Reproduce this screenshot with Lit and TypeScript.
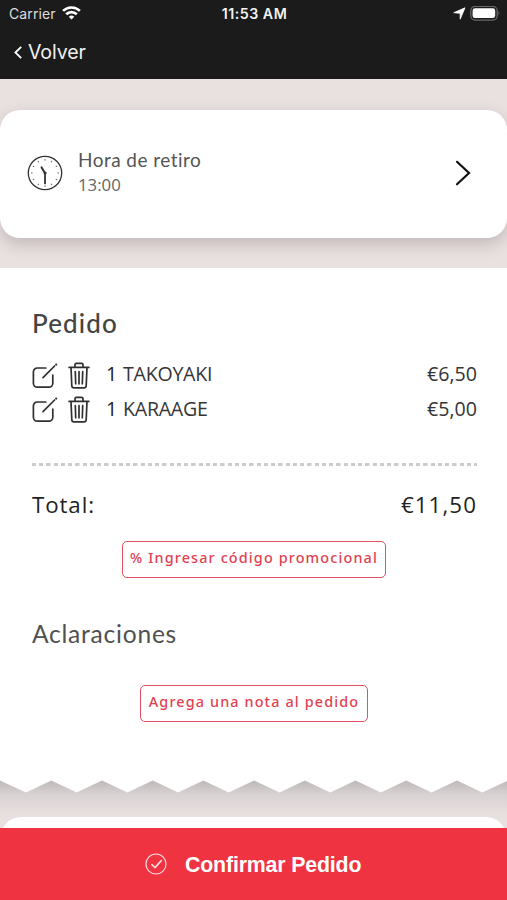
import { LitElement, html, css, svg } from "lit";
import { customElement, property } from "lit/decorators.js";

const euros = (n: number) => "€" + n.toFixed(2).replace(".", ",");

@customElement("status-bar")
class StatusBar extends LitElement {
  static styles = css`
    :host { display: grid; grid-template-columns: 1fr auto 1fr; align-items: center; height: 27px; padding: 0 7px 0 9px; color: #f2f2f2; font: 14px/27px Inter, sans-serif; }
    .side { display: flex; align-items: center; gap: 6px; }
    .carrier { letter-spacing: 0.1px; color: #dedede; }
    .time { font-weight: 600; letter-spacing: 0.5px; font-size: 14.2px; }
    .end { justify-content: flex-end; gap: 4px; }
    svg { display: block; }
    .wifi { margin-top: -2px; }
  `;
  render() {
    return html`
      <div class="side">
        <span class="carrier">Carrier</span>
        <svg class="wifi" width="19" height="14" viewBox="0 0 19 14" fill="none" stroke="#fff" stroke-width="2.6">
          <path d="M1.1 4.9a12 12 0 0 1 16.8 0" /><path d="M4.2 8.3a7.6 7.6 0 0 1 10.6 0" />
          <path d="M9.5 13.6 6.8 10.8a3.9 3.9 0 0 1 5.4 0z" fill="#fff" stroke="none" />
        </svg>
      </div>
      <span class="time">11:53 AM</span>
      <div class="side end">
        <svg width="13" height="13" viewBox="0 0 13 13"><path d="M12 .8 7.2 12.2V6.3L.8 5.7z" fill="#fff" stroke="#fff" stroke-width=".8" stroke-linejoin="round" /></svg>
        <svg width="30" height="16" viewBox="0 0 30 16">
          <rect x=".8" y=".4" width="26.4" height="13.8" rx="4.4" fill="none" stroke="#686868" stroke-width="1.3" />
          <rect x="2.6" y="2.3" width="22.6" height="9.8" rx="2.4" fill="#fff" />
          <path d="M28.6 5q1.5 2.2 0 4.4z" fill="#777" />
        </svg>
      </div>`;
  }
}

@customElement("order-line")
class OrderLine extends LitElement {
  @property({ type: Number }) qty = 1;
  @property() name = "";
  @property({ type: Number }) price = 0;
  static styles = css`
    :host { display: flex; align-items: center; height: 34.5px; color: #353535; font: 19.6px/34px "Open Sans", sans-serif; }
    svg { display: block; fill: none; stroke: #303030; stroke-width: 1.7; stroke-linecap: round; stroke-linejoin: round; margin-top: 3px; }
    .trash { margin-left: 10px; }
    .qty { margin-left: 16px; width: 17px; font-weight: 500; color: #222; }
    .name { flex: 1; letter-spacing: -0.25px; }
  `;
  render() {
    return html`
      <svg width="26" height="28" viewBox="0 0 26 28">
        <path d="M13.8 6H5.4a4 4 0 0 0-4 4v11.2a4 4 0 0 0 4 4h11.4a4 4 0 0 0 4-4v-8" />
        <path d="M11 15.6 22.6 4" /><path d="M24.2 2.5v.1" stroke-width="2.2" />
      </svg>
      <svg class="trash" width="22" height="28" viewBox="0 0 22 28">
        <path d="M1.1 5.4h19.8M7 5V2.7Q7 1.4 8.3 1.4h5.4Q15 1.4 15 2.7V5M3 5.6l.8 18.1a2.3 2.3 0 0 0 2.3 2.2h9.8a2.3 2.3 0 0 0 2.3-2.2L19 5.6M7.3 9.5l.4 12.3M11 9.5v12.3M14.7 9.5l-.4 12.3" />
      </svg>
      <span class="qty">${this.qty}</span><span class="name">${this.name}</span>
      <span>${euros(this.price)}</span>`;
  }
}

@customElement("app-root")
class AppRoot extends LitElement {
  static styles = css`
    :host { display: flex; flex-direction: column; height: 900px; overflow: hidden; background: #e9e0e0; font-family: "Open Sans", sans-serif; }
    svg { display: block; }
    header { height: 79px; background: #1b1b1b; flex: none; }
    .back { display: flex; align-items: center; gap: 6px; height: 50px; padding-left: 14px; color: #f0f0f0; font: 19.6px/52px Inter, sans-serif; letter-spacing: -0.15px; }
    .pickup { flex: none; display: flex; align-items: center; height: 128px; box-sizing: border-box; margin-top: 31px; padding: 0 36px 2px 27px; background: #fff; border-radius: 20px; box-shadow: 0 6px 16px rgba(60, 45, 50, 0.22); }
    .when { flex: 1; margin: -2px 0 0 15px; }
    .label { font: 19px/25px Lato, sans-serif; color: #555; letter-spacing: 0.46px; }
    .hour { font-size: 16.8px; line-height: 25px; color: #666; }
    .ticket { flex: none; height: 512px; box-sizing: border-box; margin-top: 30px; padding: 36px 30px 0 32px; background: #fff; }
    h2 { margin: 0; font: 500 26px/38px Lato, sans-serif; color: #444; letter-spacing: 1.1px; }
    .lines { margin-top: 15px; }
    .rule { height: 2.6px; margin-top: 37px; width: 445px; background: repeating-linear-gradient(90deg, #ccc 0 3.8px, transparent 4.2px 7.25px); }
    .total { display: flex; justify-content: space-between; margin-top: 21px; font-size: 22.3px; line-height: 36px; color: #222; letter-spacing: 0.9px; }
    .total .sum { letter-spacing: 1.1px; }
    .btn { display: block; box-sizing: border-box; height: 37px; border: 1.4px solid #e5515f; border-radius: 5px; background: #fff; color: #e23f50; font: 500 14.4px/30px "Noto Sans", sans-serif; padding: 0 0 2px; letter-spacing: 1.13px; white-space: nowrap; }
    .promo { width: 264px; margin: 18px 0 0 90px; }
    .note { width: 228px; margin: 33px 0 0 108px; }
    h3 { margin: 37px 0 0; font: 24.6px/37px Lato, sans-serif; color: #505050; letter-spacing: 0.75px; }
    .edge { flex: none; }
    .next { flex: none; height: 40px; margin: -3px 1px 0; background: #fff; border-radius: 20px; }
    .confirm { position: absolute; left: 0; right: 0; top: 828px; height: 72px; display: flex; align-items: center; gap: 18px; padding: 0 0 0 145px; box-sizing: border-box; background: #ef3340; color: #fff; font: bold 21.3px/72px "Liberation Sans", Arial, sans-serif; letter-spacing: -0.15px; }
    .confirm span { padding-top: 2px; }
  `;
  private edge() {
    const step = 50.7;
    let d = "M0 0V.6";
    for (let i = 0; i < 10; i++) d += `L${i * step + 26} 12.4L${(i + 1) * step + 0.6} 0.6`;
    return html`<svg class="edge" width="507" height="40" viewBox="0 0 507 40">
      <defs><linearGradient id="shade" x1="0" y1="0" x2="0" y2="1"><stop offset="0" stop-color="#bdb7b7" /><stop offset=".36" stop-color="#d9d2d2" /><stop offset=".85" stop-color="#e8dfdf" /></linearGradient></defs>
      <rect width="507" height="40" fill="url(#shade)" /><path d="${d}V0Z" fill="#fff" />
    </svg>`;
  }
  private clock() {
    return html`<svg width="36" height="36" viewBox="0 0 36 36" fill="none" stroke="#333" stroke-linecap="round">
      <circle cx="18" cy="18" r="16.7" stroke-width="1.3" />
      ${[...Array(12).keys()].map((i) => svg`<path d="M18 4.4v.8" stroke-width="1" stroke="#666" transform="rotate(${i * 30} 18 18)" />`)}
      <path d="M18 18v10.4" stroke-width="1.8" /><path d="M18 18 14.6 12.4" stroke-width="2" /><circle cx="18" cy="18" r="1" fill="#333" />
    </svg>`;
  }
  render() {
    return html`
      <header>
        <status-bar></status-bar>
        <div class="back">
          <svg width="8" height="13" viewBox="0 0 8 13" fill="none" stroke="#fff" stroke-width="1.8"><path d="M7.2.8 1.4 6.5l5.8 5.7" /></svg>
          <span>Volver</span>
        </div>
      </header>
      <section class="pickup">
        ${this.clock()}
        <div class="when"><div class="label">Hora de retiro</div><div class="hour">13:00</div></div>
        <svg width="16" height="26" viewBox="0 0 16 26" fill="none" stroke="#111" stroke-width="2.2" stroke-linecap="round"><path d="M2 1.8 14 13 2 24.2" /></svg>
      </section>
      <section class="ticket">
        <h2>Pedido</h2>
        <div class="lines">
          <order-line .qty=${1} .name=${"TAKOYAKI"} .price=${6.5}></order-line>
          <order-line .qty=${1} .name=${"KARAAGE"} .price=${5}></order-line>
        </div>
        <div class="rule"></div>
        <div class="total"><span>Total:</span><span class="sum">${euros(11.5)}</span></div>
        <button class="btn promo">% Ingresar código promocional</button>
        <h3>Aclaraciones</h3>
        <button class="btn note">Agrega una nota al pedido</button>
      </section>
      ${this.edge()}
      <section class="next"></section>
      <div class="confirm">
        <svg width="22" height="22" viewBox="0 0 22 22" fill="none" stroke="#ffd9dc" stroke-width="1.2" stroke-linecap="round" stroke-linejoin="round"><circle cx="11" cy="11" r="10" /><path d="m7 11.6 3 3 6.3-7" stroke-width="1.6" /></svg>
        <span>Confirmar Pedido</span>
      </div>`;
  }
}
